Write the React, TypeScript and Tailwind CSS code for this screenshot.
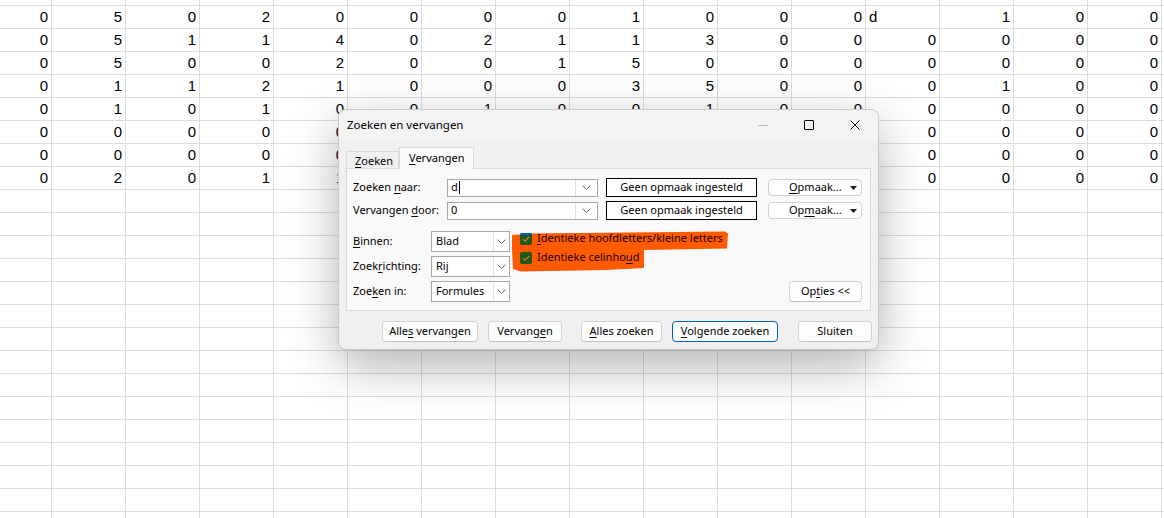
import React from "react";

// cells fully hidden behind the dialog are left empty ("-")
const data: string[][] = [
  "0 5 0 2 0 0 0 0 1 0 0 0 d 1 0 0",
  "0 5 1 1 4 0 2 1 1 3 0 0 0 0 0 0",
  "0 5 0 0 2 0 0 1 5 0 0 0 0 0 0 0",
  "0 1 1 2 1 0 0 0 3 5 0 0 0 1 0 0",
  "0 1 0 1 0 0 1 0 0 1 0 0 0 0 0 0",
  "0 0 0 0 0 - - - - - - - 0 0 0 0",
  "0 0 0 0 0 - - - - - - - 0 0 0 0",
  "0 2 0 1 1 - - - - - - - 0 0 0 0",
].map((r) => r.split(" ").map((c) => (c === "-" ? "" : c)));

const TOTAL_ROWS = 23;

function Chevron() {
  return (
    <svg width="9" height="5" viewBox="0 0 9 5">
      <path d="M0.5 0.5L4.5 4.5L8.5 0.5" fill="none" stroke="#606060" strokeWidth="1" />
    </svg>
  );
}

function DropTri() {
  return (
    <svg width="7" height="4" viewBox="0 0 7 4">
      <path d="M0 0H7L3.5 4Z" fill="#1a1a1a" />
    </svg>
  );
}

function Check() {
  return (
    <svg width="12" height="12" viewBox="0 0 12 12">
      <path d="M3 6.2L5.1 8.2L9.2 4" fill="none" stroke="#e3741f" strokeWidth="1.1" />
    </svg>
  );
}

function Row({ cells }: { cells: string[] }) {
  return (
    <div className="flex h-[23px] shrink-0 border-b border-[#dcdcdc]">
      {Array.from({ length: 16 }).map((_, i) => {
        const v = cells[i] ?? "";
        const isText = v !== "" && isNaN(Number(v));
        return (
          <div
            key={i}
            className={`${i === 0 ? "w-[52px]" : "w-[74px]"} shrink-0 border-r border-[#dcdcdc] leading-[22px] ${
              isText ? "pl-[3px] text-left" : "pr-[3px] text-right"
            }`}
          >
            {v}
          </div>
        );
      })}
    </div>
  );
}

function SelectBox({ value }: { value: string }) {
  return (
    <div className="flex h-[21px] w-[79px] border border-[#a7a7a7] bg-white">
      <div className="flex flex-1 items-center pl-[4px]">{value}</div>
      <div className="flex w-[16px] items-center justify-center border-l border-[#e0e0e0]">
        <Chevron />
      </div>
    </div>
  );
}

function ComboInput({ value, caret }: { value: string; caret?: boolean }) {
  return (
    <div className="flex h-[18px] w-[151px] border border-[#a7a7a7] bg-white">
      <div className="flex flex-1 items-center pl-[3px]">
        {value}
        {caret && <span className="ml-px inline-block h-[13px] w-px bg-black" />}
      </div>
      <div className="flex w-[22px] items-center justify-center border-l border-[#e0e0e0]">
        <Chevron />
      </div>
    </div>
  );
}

function Btn({ children, className = "" }: { children: React.ReactNode; className?: string }) {
  return (
    <div
      className={`flex h-[21px] items-center justify-center rounded-[4px] border border-[#d2d2d2] border-b-[#c2c2c2] bg-[#fdfdfd] ${className}`}
    >
      {children}
    </div>
  );
}

export default function App() {
  return (
    <div className="relative h-[518px] w-[1164px] overflow-hidden bg-white">
      {/* spreadsheet */}
      <div className="flex h-full flex-col font-['Liberation_Sans',Arial,sans-serif] text-[15px] text-black">
        <div className="flex h-[6px] shrink-0 border-b border-[#dcdcdc]">
          {Array.from({ length: 16 }).map((_, i) => (
            <div key={i} className={`${i === 0 ? "w-[52px]" : "w-[74px]"} shrink-0 border-r border-[#dcdcdc]`} />
          ))}
        </div>
        {Array.from({ length: TOTAL_ROWS }).map((_, r) => (
          <Row key={r} cells={data[r] ?? []} />
        ))}
      </div>

      {/* dialog */}
      <div className="absolute left-[338px] top-[109px] flex h-[241px] w-[541px] flex-col rounded-[8px] border border-[#c9c9c9] bg-[#f0f0f0] font-['Noto_Sans',sans-serif] text-[11px] text-black shadow-[0_16px_50px_rgba(0,0,0,0.3)]">
        {/* title bar */}
        <div className="flex h-[30px] shrink-0 items-center rounded-t-[8px] bg-[#f3f3f3]">
          <span className="pl-[8px] text-[11.5px]">Zoeken en vervangen</span>
          <div className="ml-auto flex h-full">
            <div className="flex w-[46px] items-center justify-center pt-[1px]">
              <div className="h-px w-[10px] bg-[#b8b8b8]" />
            </div>
            <div className="flex w-[46px] items-center justify-center">
              <div className="h-[10px] w-[10px] rounded-[1px] border border-black" />
            </div>
            <div className="flex w-[46px] items-center justify-center">
              <svg width="10" height="10" viewBox="0 0 10 10">
                <path d="M0.5 0.5L9.5 9.5M9.5 0.5L0.5 9.5" stroke="#000" strokeWidth="1" />
              </svg>
            </div>
          </div>
        </div>

        {/* tabs */}
        <div className="mt-[7px] flex h-[22px] shrink-0 items-end px-[7px]">
          <div className="flex h-[18px] w-[53px] items-center border border-b-0 border-[#d9d9d9] bg-[#f0f0f0] pl-[8px] pt-[1px]">
            <span>
              <u className="underline-offset-2">Z</u>oeken
            </span>
          </div>
          <div className="relative z-10 flex h-[22px] w-[75px] items-center border border-b-0 border-[#d9d9d9] bg-[#f9f9f9] pl-[9px]">
            <span>
              <u className="underline-offset-2">V</u>ervangen
            </span>
          </div>
        </div>

        {/* panel */}
        <div className="relative mx-[7px] -mt-px flex h-[143px] shrink-0 flex-col border border-[#dadada] bg-[#f9f9f9] pl-[6px] pt-[9px]">
          {/* orange highlight */}
          <svg className="absolute left-0 top-0" width="400" height="120" viewBox="0 0 400 120">
            <path
              d="M165 66 L184 64.5 L378 62.5 L381 64.5 L380 79.5 L297 81 L297 99 L259 101 L174 102.5 L166 100 L165 80 Z"
              fill="#ff5a00"
            />
          </svg>

          <div className="relative flex h-[19px] items-center">
            <div className="w-[94px]">
              Zoeken <u className="underline-offset-2">n</u>aar:
            </div>
            <ComboInput value="d" caret />
            <div className="ml-[8px] flex h-[19px] w-[151px] items-center justify-center border border-black bg-white">
              Geen opmaak ingesteld
            </div>
            <div className="ml-[11px] flex h-[17px] w-[94px] items-center justify-between rounded-[4px] border border-[#d2d2d2] bg-white pl-[20px] pr-[4px]">
              <span>
                <u className="underline-offset-2">O</u>pmaak...
              </span>
              <DropTri />
            </div>
          </div>
          <div className="relative mt-[4px] flex h-[19px] items-center">
            <div className="w-[94px]">
              Vervangen <u className="underline-offset-2">d</u>oor:
            </div>
            <ComboInput value="0" />
            <div className="ml-[8px] flex h-[19px] w-[151px] items-center justify-center border border-black bg-white">
              Geen opmaak ingesteld
            </div>
            <div className="ml-[11px] flex h-[17px] w-[94px] items-center justify-between rounded-[4px] border border-[#d2d2d2] bg-white pl-[20px] pr-[4px]">
              <span>
                Op<u className="underline-offset-2">m</u>aak...
              </span>
              <DropTri />
            </div>
          </div>

          <div className="relative mt-[11px] flex pr-[8px]">
            <div className="flex flex-col gap-[4px]">
              <div className="flex items-center">
                <div className="w-[78px]">
                  <u className="underline-offset-2">B</u>innen:
                </div>
                <SelectBox value="Blad" />
              </div>
              <div className="flex items-center">
                <div className="w-[78px]">
                  Zoek<u className="underline-offset-2">r</u>ichting:
                </div>
                <SelectBox value="Rij" />
              </div>
              <div className="flex items-center">
                <div className="w-[78px]">
                  Zoe<u className="underline-offset-2">k</u>en in:
                </div>
                <SelectBox value="Formules" />
              </div>
            </div>

            <div className="-mt-[2px] ml-[10px] flex flex-col text-[#1a0700]">
              <div className="flex h-[19px] items-center gap-[5px]">
                <div className="relative h-[12px] w-[12px] overflow-hidden rounded-[2px] bg-[#1b5a1d]">
                  <div className="absolute left-0 top-0 h-[2px] w-full bg-[#005fb8]" />
                  <Check />
                </div>
                <span>
                  <u className="underline-offset-2">I</u>dentieke hoofdletters/kleine letters
                </span>
              </div>
              <div className="flex h-[19px] items-center gap-[5px]">
                <div className="h-[12px] w-[12px] rounded-[2px] bg-[#1b5a1d]">
                  <Check />
                </div>
                <span>
                  Identieke celinho<u className="underline-offset-2">u</u>d
                </span>
              </div>
            </div>

            <Btn className="ml-auto w-[73px] self-end">
              <span>
                Op<u className="underline-offset-2">t</u>ies &lt;&lt;
              </span>
            </Btn>
          </div>
        </div>

        {/* bottom buttons */}
        <div className="mt-[10px] flex">
          <Btn className="ml-[43px] w-[96px]">
            <span>
              Alle<u className="underline-offset-2">s</u> vervangen
            </span>
          </Btn>
          <Btn className="ml-[10px] w-[74px]">
            <span>
              Vervang<u className="underline-offset-2">e</u>n
            </span>
          </Btn>
          <Btn className="ml-[19px] w-[81px]">
            <span>
              <u className="underline-offset-2">A</u>lles zoeken
            </span>
          </Btn>
          <div className="ml-[10px] flex h-[21px] w-[106px] items-center justify-center rounded-[4px] border border-[#005fb8] bg-[#fdfdfd]">
            <span>
              <u className="underline-offset-2">V</u>olgende zoeken
            </span>
          </div>
          <Btn className="ml-[20px] w-[74px]">Sluiten</Btn>
        </div>
      </div>
    </div>
  );
}
